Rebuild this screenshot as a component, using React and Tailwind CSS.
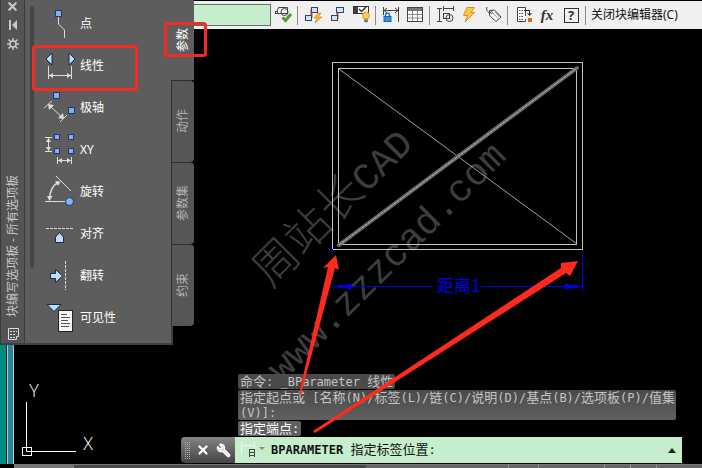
import { Wrench, X } from "lucide-react";

const params = [
  { name: "点", icon: <PointIcon /> },
  { name: "线性", icon: <LinearIcon /> },
  { name: "极轴", icon: <PolarIcon /> },
  { name: "XY", icon: <XYIcon /> },
  { name: "旋转", icon: <RotateIcon /> },
  { name: "对齐", icon: <AlignIcon /> },
  { name: "翻转", icon: <FlipIcon /> },
  { name: "可见性", icon: <VisibilityIcon /> },
];

const tabs = ["动作", "参数集", "约束"];

function ParamSvg({ children }) {
  return (
    <svg width="34" height="42" viewBox="0 0 34 42" fill="none" stroke="#dcdcdc" className="shrink-0">
      {children}
    </svg>
  );
}

function Grip({ x, y, size = 6 }) {
  return <rect x={x + 0.5} y={y + 0.5} width={size} height={size} fill="#86aee6" stroke="#1c3970" />;
}

function PointIcon() {
  return (
    <ParamSvg>
      <path d="M14.5 14V21L20.5 27V35" />
      <Grip x={11} y={7} />
    </ParamSvg>
  );
}

function LinearIcon() {
  return (
    <ParamSvg>
      <path d="M2 14L8 8V20ZM31 14L25 8V20Z" fill="#bcdcf8" stroke="#16294a" />
      <path d="M4.5 21V34M27.5 21V34M5 30.5H27" />
      <path d="M5 30.5L9 28V33ZM27 30.5L23 28V33Z" fill="#dcdcdc" stroke="none" />
    </ParamSvg>
  );
}

function PolarIcon() {
  return (
    <ParamSvg>
      <path d="M0 21L8 14M16 35L23 28M6 19L19 31" />
      <path d="M4 17L10 18L5 23ZM20 32L14 31L19 26Z" fill="#dcdcdc" stroke="none" />
      <Grip x={9} y={5} />
      <Grip x={24} y={20} />
    </ParamSvg>
  );
}

function XYIcon() {
  return (
    <ParamSvg>
      <path d="M1 8.5H8M1 22.5H8M4.5 9V22M13.5 28V35M27.5 28V35M14 31.5H27" />
      <path d="M4.5 9L2 13H7ZM4.5 22L2 18H7ZM14 31.5L18 29V34ZM27 31.5L23 29V34Z" fill="#dcdcdc" stroke="none" />
      <Grip x={10} y={5} size={5} />
      <Grip x={24} y={5} size={5} />
      <Grip x={10} y={19} size={5} />
      <Grip x={24} y={19} size={5} />
    </ParamSvg>
  );
}

function RotateIcon() {
  return (
    <ParamSvg>
      <path d="M12 5L27 20M1 30.5H21" />
      <path d="M5.5 28C6 20 9 14 14 11.5" strokeWidth="1.5" />
      <path d="M5.5 30L3 25H8.5ZM16.5 10.5L11 10L14 15Z" fill="#dcdcdc" stroke="none" />
      <circle cx="25.5" cy="30.5" r="4" fill="#7fb4ee" stroke="#1c3970" />
    </ParamSvg>
  );
}

function AlignIcon() {
  return (
    <ParamSvg>
      <path d="M2 15.5H30" strokeDasharray="3 1" />
      <path d="M11.5 29.5V24L15.5 19.5L19.5 24V29.5Z" fill="#c4dcf8" stroke="#16294a" />
    </ParamSvg>
  );
}

function FlipIcon() {
  return (
    <ParamSvg>
      <path d="M21.5 6V35" strokeDasharray="3 1" />
      <path d="M6.5 18.5H11.5V14.5L18.5 21L11.5 27.5V23.5H6.5Z" fill="#c4dcf8" stroke="#16294a" />
    </ParamSvg>
  );
}

function VisibilityIcon() {
  return (
    <ParamSvg>
      <path d="M3 7.5H17L10 14.5Z" fill="#bcdcf8" stroke="#16294a" />
      <rect x="14.5" y="13.5" width="14" height="21" fill="#f4f4f4" stroke="#222" />
      <path d="M17 17.5H23M17 20.5H26M17 23.5H24M17 26.5H26M17 29.5H25" stroke="#555" />
    </ParamSvg>
  );
}

function ToolButton({ label, children }) {
  return (
    <button type="button" aria-label={label} className="shrink-0">
      <svg width="24" height="24" viewBox="0 0 24 24" fill="none" stroke="#444">
        {children}
      </svg>
    </button>
  );
}

function Separator() {
  return <span className="ml-0.5 mr-[3px] h-[19px] w-px shrink-0 bg-[#8c8c8c]" />;
}

function Toolbar() {
  return (
    <header className="flex h-[29px] items-center overflow-hidden border-t border-black bg-[#f0f0f0] pl-[100px]">
      <input
        aria-label="块名称"
        readOnly
        className="h-[22px] w-[171px] shrink-0 border border-[#6d6d6d] bg-[#c6eecd] outline-none"
      />
      <ToolButton label="测试块">
        <path d="M5.5 9.5L7.5 4.5H16.5V10.5H7" />
        <rect x="4.5" y="8.5" width="2" height="2" fill="#fff" />
        <circle cx="13.5" cy="9" r="3.5" />
        <path d="M11.5 14.5L14.5 17.5L20 11" stroke="#4d9a36" strokeWidth="3" />
      </ToolButton>
      <Separator />
      <ToolButton label="更新参数">
        <path d="M10.5 6V15" stroke="#d23b32" strokeWidth="2" />
        <rect x="10.5" y="4.5" width="6" height="5" fill="#cfe4f7" stroke="#2c4769" />
        <rect x="4.5" y="12.5" width="6" height="5" fill="#cfe4f7" stroke="#2c4769" />
        <path d="M17 10L13 15H16L14 20L21 14H17.5L20 10Z" fill="#f7b432" stroke="#d98213" strokeWidth=".6" />
      </ToolButton>
      <ToolButton label="块属性">
        <path d="M12.5 6V16" stroke="#d23b32" strokeWidth="2" />
        <rect x="11.5" y="4.5" width="7" height="5" fill="#cfe4f7" stroke="#2c4769" />
        <rect x="6.5" y="12.5" width="6" height="5" fill="#cfe4f7" stroke="#2c4769" />
      </ToolButton>
      <ToolButton label="可见性状态">
        <rect x="4.5" y="3.5" width="15" height="7" fill="#fff" stroke="#333" />
        <path d="M5 4H9V10H5Z" fill="#444" stroke="none" />
        <path d="M10 6L12.5 8.5L17 4" stroke="#333" strokeWidth="1.5" />
        <circle cx="17" cy="12.5" r="3.5" fill="#fbcf55" stroke="#e39a20" />
        <path d="M15.5 16.5H18.5V19H15.5Z" fill="#777" stroke="#666" strokeWidth=".5" />
      </ToolButton>
      <Separator />
      <ToolButton label="约束">
        <path d="M4.5 4V12M19.5 4V19M5 7.5H19M8 5L5 7.5L8 10M16 5L19 7.5L16 10" />
        <path d="M6.5 14V12C6.5 9.5 10.5 9.5 10.5 12V14" stroke="#1d67b1" strokeWidth="1.4" />
        <rect x="5" y="13.5" width="7" height="5" fill="#3f8edb" stroke="#1d5fa6" />
      </ToolButton>
      <ToolButton label="块表">
        <rect x="4.5" y="4.5" width="15" height="14" fill="#fff" stroke="#444" />
        <path d="M5 5H19V8H5Z" fill="#777" stroke="none" />
        <path d="M5 11.5H19M5 15H19M9.5 8V18M14.5 8V18" stroke="#888" />
      </ToolButton>
      <Separator />
      <ToolButton label="参数管理">
        <path d="M4 5.5H9M4 18.5H9M6.5 6V18M10.5 3V8M20.5 3V8M11 5.5H20" />
        <rect x="10.5" y="10.5" width="6" height="5" />
        <circle cx="16.5" cy="15" r="3.5" />
      </ToolButton>
      <ToolButton label="动作">
        <path d="M10 4.5H17.5L14 9.5H17.5L8 19L10.5 12.5H6.5Z" fill="#fbc94a" stroke="#e08e1b" />
      </ToolButton>
      <ToolButton label="属性定义">
        <path d="M6 4C5 7 6 9 9.5 10" />
        <path d="M8.5 7.5L13.5 7L20 14L15 18.5L8.5 12.5Z" fill="#fafafa" />
        <path d="M12 10L17 15.5M14 9L18.5 14" stroke="#999" />
        <circle cx="10.5" cy="9.5" r="1" />
      </ToolButton>
      <Separator />
      <ToolButton label="编写选项板">
        <path d="M14.5 13V4.5H6.5V18.5H14.5V16" fill="#fff" />
        <path d="M8 7.5H13M8 10.5H13M8 13.5H13M8 16.5H13" stroke="#555" strokeDasharray="1.5 1" />
        <path d="M13 7.5H18.5V12M16.5 10L18.5 12.5L20.5 10" stroke="#222" />
        <rect x="17" y="15" width="4" height="4" fill="#e0681e" stroke="none" />
      </ToolButton>
      <button type="button" className="w-6 shrink-0 font-['Liberation_Serif',serif] text-[15px] font-bold italic text-[#333]">
        fx
      </button>
      <button type="button" aria-label="帮助" className="flex w-6 shrink-0 justify-center">
        <span className="flex size-[15px] items-center justify-center border border-[#333] text-[13px] font-bold leading-none text-[#333]">
          ?
        </span>
      </button>
      <Separator />
      <button type="button" className="ml-0.5 shrink-0 whitespace-nowrap text-xs text-[#111]">
        关闭块编辑器(C)
      </button>
    </header>
  );
}

function Palette() {
  return (
    <aside className="absolute left-0 top-0 z-10 flex items-start text-xs">
      <div className="flex self-stretch border-b-2 border-r-2 border-[#3f3f3f] bg-[#5d5d5d]">
        <div className="flex w-[25px] flex-col items-center border-x border-[#3a3a3a] bg-[#545454] pb-[2px] text-[#c8c8c8]">
          <button type="button" aria-label="关闭">
            <X size={13} strokeWidth={4} />
          </button>
          <button type="button" aria-label="自动隐藏" className="mt-1.5">
            <svg width="12" height="12" viewBox="0 0 12 12" fill="currentColor">
              <path d="M2 1H4V11H2ZM10 1V11L5 6Z" />
            </svg>
          </button>
          <button type="button" aria-label="特性" className="mt-[7px]">
            <svg width="12" height="12" viewBox="0 0 12 12" fill="none" stroke="currentColor">
              <circle cx="6" cy="6" r="3" strokeWidth="1.5" />
              <path d="M6 0V3M6 9V12M0 6H3M9 6H12M1.5 1.5L4 4M8 8L10.5 10.5M10.5 1.5L8 4M4 8L1.5 10.5" strokeWidth="1.5" />
            </svg>
          </button>
          <h2 className="mt-auto rotate-180 whitespace-nowrap [text-orientation:sideways] [writing-mode:vertical-rl]">
            块编写选项板 - 所有选项板
          </h2>
          <svg width="14" height="14" viewBox="0 0 14 14" fill="none" stroke="#ddd" className="mt-2.5">
            <path d="M2.5 12.5V1.5H12.5V9.5H10.5V12.5Z" />
            <path d="M4 4.5H11M4 7.5H10M4 10.5H9" strokeDasharray="2 1" />
          </svg>
        </div>
        <div className="relative w-[146px] pb-1 pt-[3px]">
          <span className="absolute left-[5px] top-1.5 h-[262px] w-1 rounded-full bg-[#454545]" />
          {params.map((p) => (
            <button
              key={p.name}
              type="button"
              className="flex h-[42px] w-full items-center gap-0.5 pl-[19px] text-white"
            >
              {p.icon}
              {p.name}
            </button>
          ))}
        </div>
      </div>
      <nav className="-ml-0.5 flex w-[23px] flex-col text-[#b4b4b4]">
        <button type="button" className="flex h-20 items-center justify-center bg-[#5d5d5d] text-white">
          <span className="rotate-180 [text-orientation:sideways] [writing-mode:vertical-rl]">参数</span>
        </button>
        {tabs.map((tab) => (
          <button
            key={tab}
            type="button"
            className="flex h-[82px] items-center justify-center rounded-r-sm border-l border-t border-[#2f2f2f] bg-[#565656]"
          >
            <span className="rotate-180 [text-orientation:sideways] [writing-mode:vertical-rl]">{tab}</span>
          </button>
        ))}
      </nav>
    </aside>
  );
}

function Drawing() {
  return (
    <svg className="absolute inset-0 h-full w-full" fill="none">
      <g fill="#3d3d3d" fontFamily="'Liberation Mono', 'Noto Sans CJK SC', monospace" fontSize="38">
        <text transform="translate(271 289) rotate(-45)">
          <tspan fontSize="45" fontWeight="300" fontFamily="'Noto Sans CJK SC', sans-serif">周站长</tspan>
          <tspan>CAD</tspan>
        </text>
        <text transform="translate(282 383) rotate(-45)">www.zzzcad.com</text>
      </g>

      <g stroke="#c4c4c4">
        <rect x="332.5" y="62.5" width="250" height="187" />
        <rect x="338.5" y="68.5" width="238" height="176" />
        <path d="M339 69L577 244" stroke="#a0a0a0" />
      </g>
      <path d="M339 245L577 68" stroke="#666" strokeWidth="4" strokeLinecap="round" />
      <path d="M339 245L577 68" stroke="#b8b8b8" strokeDasharray="3 1" />

      <g stroke="#0000e6">
        <path d="M328 245L337 254M337 245L328 254" stroke="#000080" />
        <path d="M334 286.5H433M481 286.5H582M582.5 254V291" />
        <path d="M333.5 281V291" stroke="#000080" />
        <path d="M336 286.5L342 285V288ZM341 286.5L351 284V289ZM580 286.5L574 285V288ZM575 286.5L565 284V289Z" fill="#0000e6" />
      </g>
      <text x="437" y="292" fill="#0000e6" fontSize="17" fontFamily="'Noto Sans CJK SC', sans-serif">距离1</text>

      <g stroke="#fff">
        <path d="M26.5 402V451.5H76" />
        <rect x="22.5" y="447.5" width="9" height="8" />
      </g>
      <g fill="#fff" fontFamily="'Open Sans', sans-serif" fontWeight="300" fontSize="18" textAnchor="middle">
        <text x="34" y="397">Y</text>
        <text x="88" y="450">X</text>
      </g>
    </svg>
  );
}

// ASCII runs are set one size below the Chinese text
function ConsoleText({ text }) {
  return text.split(/([ -~]+)/).map((part, i) =>
    i % 2 ? (
      <span key={i} className="whitespace-pre text-xs leading-none">
        {part}
      </span>
    ) : (
      part
    )
  );
}

function CommandLine() {
  return (
    <section className="absolute bottom-[5px] left-[181px] right-5 z-10 font-['DejaVu_Sans_Mono','Noto_Sans_CJK_SC',monospace] text-[13px] leading-[15px]">
      <div className="mb-px ml-[57px] mr-1.5 flex flex-col items-start gap-px text-[#c4c4c4]">
        <p className="rounded-xs bg-[#4a4a4a] px-0.5">
          <ConsoleText text="命令: _BParameter 线性" />
        </p>
        <p className="self-stretch whitespace-nowrap rounded-xs bg-linear-to-b from-[#4a4a4a] to-[#606060] px-0.5">
          <ConsoleText text="指定起点或 [名称(N)/标签(L)/链(C)/说明(D)/基点(B)/选项板(P)/值集" />
          <br />
          <ConsoleText text="(V)]:" />
        </p>
        <p className="rounded-xs bg-[#606060] px-0.5 text-white">
          <ConsoleText text="指定端点:" />
        </p>
      </div>
      <div className="flex h-[26px] items-stretch">
        <div className="flex w-[54px] items-center justify-between rounded-l-sm bg-linear-to-b from-[#858585] to-[#454545] px-1 text-white">
          <svg width="5" height="17" viewBox="0 0 5 17" stroke="#b8b8b8">
            <path d="M.5 0V17M2.5 0V17M4.5 0V17" strokeDasharray="1 1" />
          </svg>
          <button type="button" aria-label="关闭命令行">
            <X size={14} strokeWidth={4} />
          </button>
          <button type="button" aria-label="自定义">
            <Wrench size={15} strokeWidth={2} className="-scale-x-100 fill-[#ddd]" />
          </button>
        </div>
        <label className="flex min-w-0 flex-1 items-center bg-[#c6eecd] pl-1 pr-0.5 text-[#111]">
          <svg width="32" height="22" viewBox="0 0 32 22" fill="none" stroke="#e9f8eb" className="shrink-0">
            <path d="M2.5 3V15M15.5 3V9M3 6.5H15" />
            <path d="M10 10.5H15M10 13.5H15M10 16.5H15M10.5 10V18M15.5 10V18" stroke="#444" />
            <path d="M20 8H26L23 11Z" fill="#7d9481" stroke="none" />
          </svg>
          <span className="whitespace-nowrap">
            <b className="text-xs">BPARAMETER </b>
            <ConsoleText text="指定标签位置:" />
          </span>
          <input className="min-w-0 flex-1 bg-transparent outline-none" />
          <button type="button" aria-label="命令历史" className="w-3">
            <svg width="8" height="5" viewBox="0 0 8 5">
              <path d="M0 5L4 0L8 5Z" fill="#222" />
            </svg>
          </button>
        </label>
      </div>
    </section>
  );
}

function Annotations() {
  return (
    <svg className="pointer-events-none absolute inset-0 z-20 h-full w-full" fill="none">
      <g stroke="#f22c22" strokeWidth="3">
        <rect x="33.5" y="46.5" width="103" height="43" rx="2" />
        <rect x="165.5" y="23.5" width="40" height="32" rx="2" />
      </g>
      <g fill="#ff2a1c">
        <path d="M336 255L339 270L335 268L301 394L299 394L328 267L323 268Z" />
        <path d="M578 261L570 276L566 273L315 433L313 431L561 268L561 263Z" />
      </g>
    </svg>
  );
}

export default function App() {
  return (
    <div className="relative flex min-h-screen flex-col overflow-hidden bg-black font-['Noto_Sans','Noto_Sans_CJK_SC',sans-serif]">
      <Toolbar />
      <Drawing />
      <main className="flex flex-1">
        <div className="w-1.5 bg-[#008c82]" />
        <div className="w-px bg-[#123]" />
        <div className="w-[7px] border-x border-[#9cd0da] bg-[#2f8499]" />
      </main>
      <footer className="ml-3.5 flex h-1 border-t border-[#777] bg-[#666]">
        <span className="w-[60px] bg-[#777]" />
        <span className="w-[292px] bg-[#4a4a4a]" />
        <span className="w-[143px] border-r border-[#999]" />
        <span className="w-[30px] border-r border-[#999]" />
        <span className="w-[66px] border-r border-[#999]" />
        <span className="w-[26px] border-r border-[#999]" />
        <span className="w-[26px] border-r border-[#999]" />
      </footer>
      <Palette />
      <CommandLine />
      <Annotations />
    </div>
  );
}
